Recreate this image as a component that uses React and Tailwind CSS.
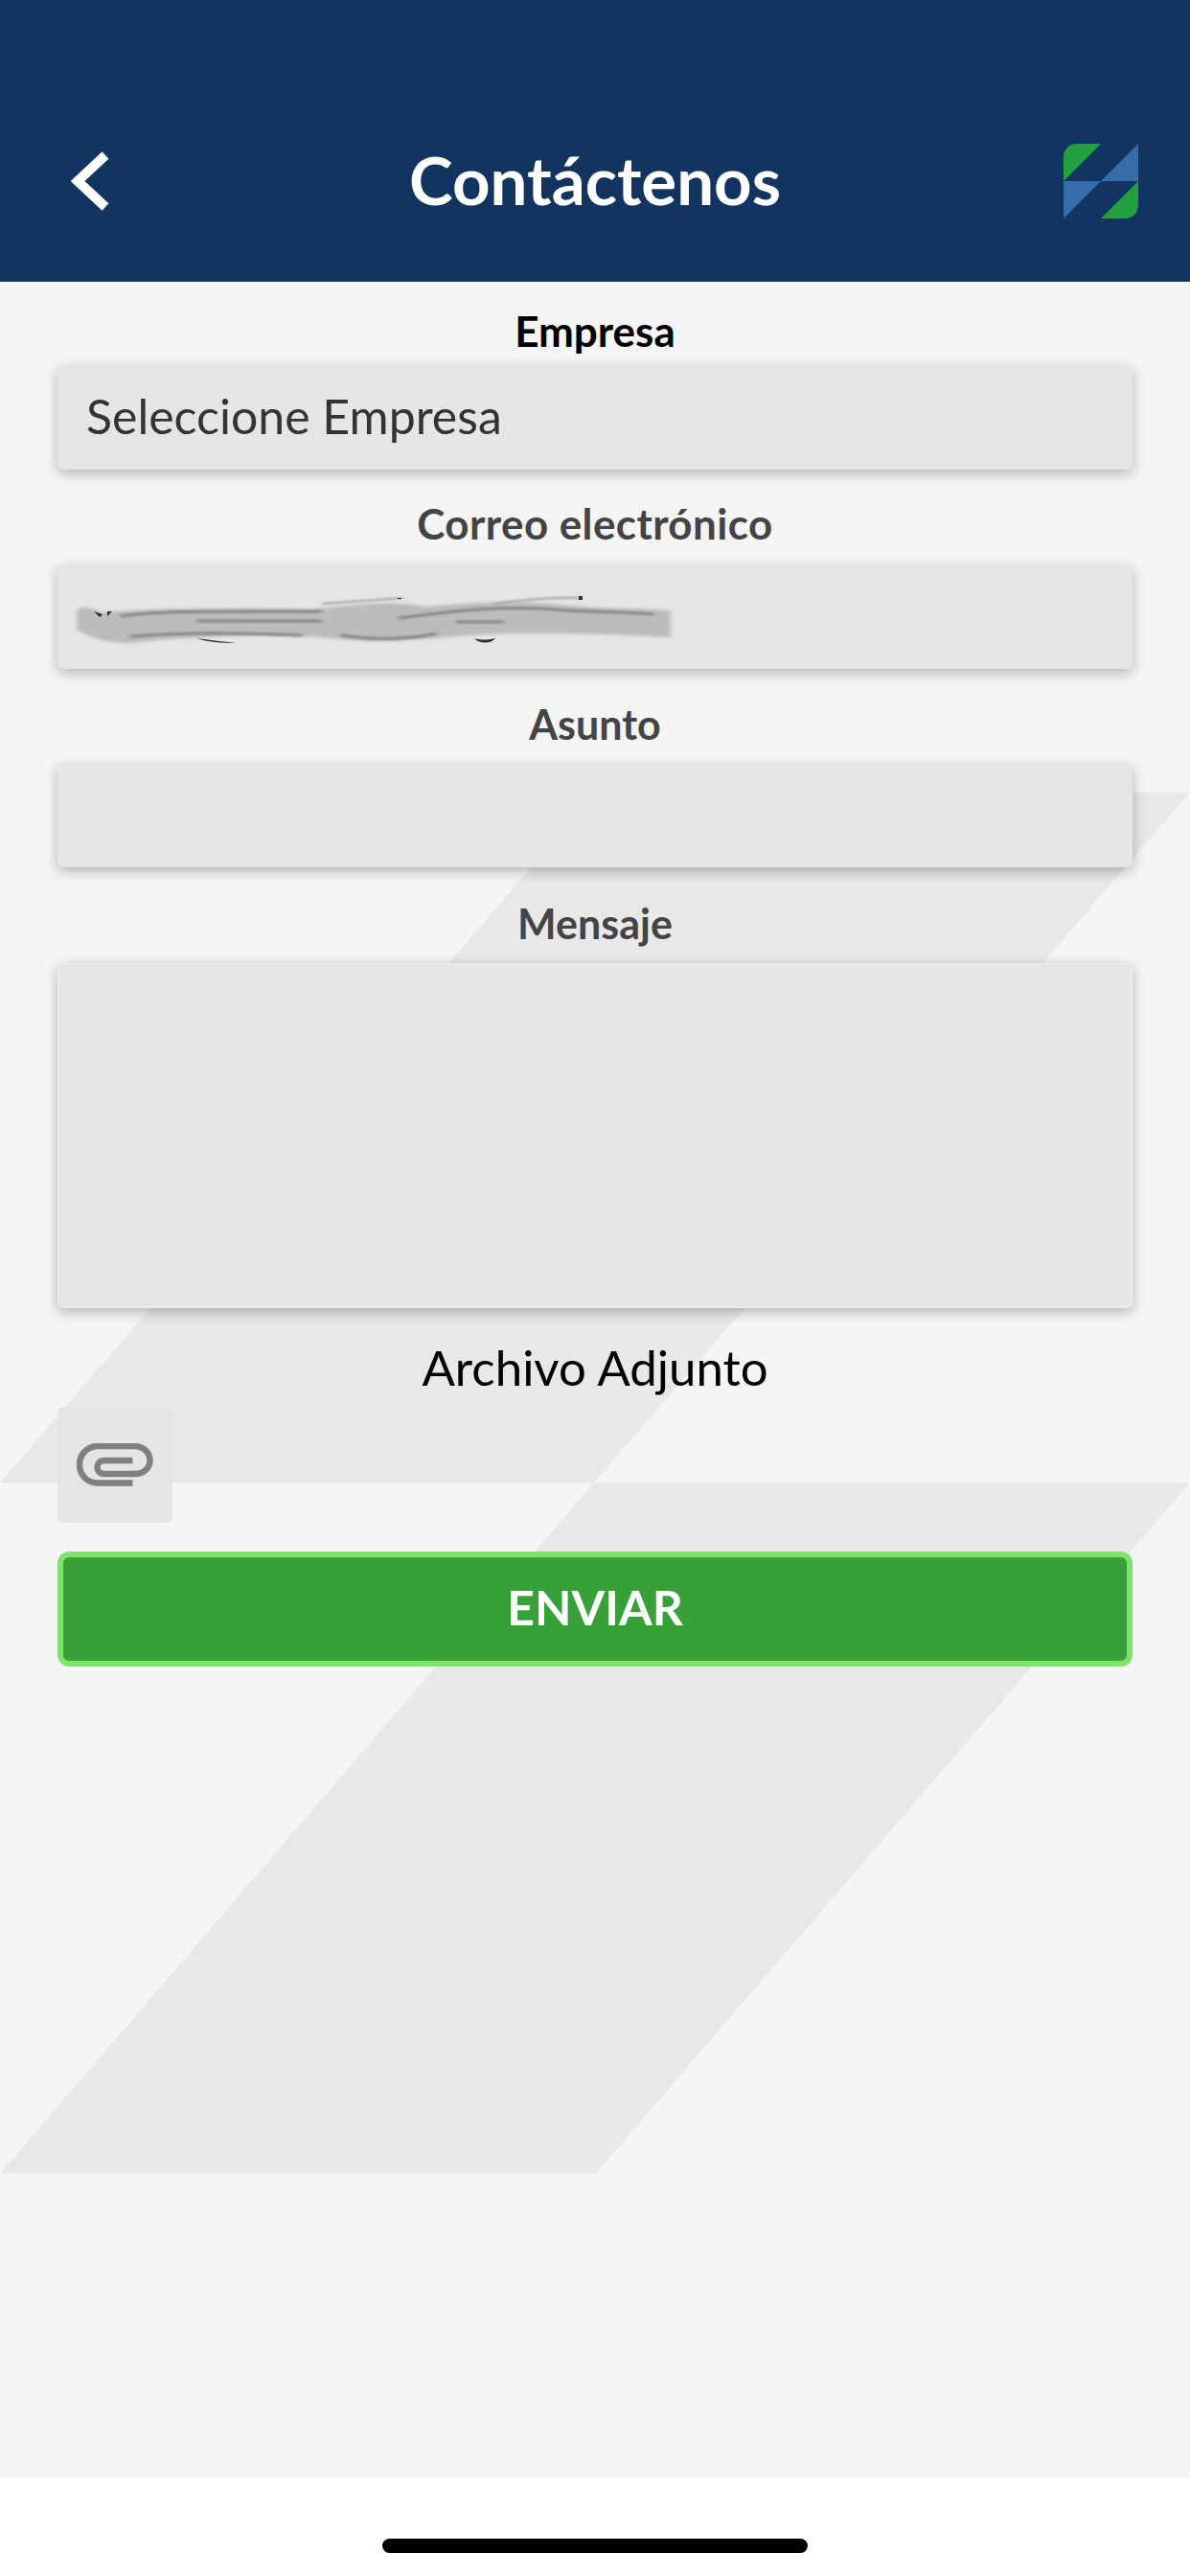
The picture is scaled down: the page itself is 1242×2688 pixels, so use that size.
const fieldClass = "mx-[60px] h-[108px] rounded-[6px] bg-[#e5e5e5] shadow-[0_4px_14px_rgba(0,0,0,0.28)]"
const labelClass = "flex items-center justify-center font-bold text-[43px] leading-none text-[#444444]"

const Logo = () => (
  <svg width="78" height="78" viewBox="0 0 78 78">
    <path d="M0 39V14A14 14 0 0 1 14 0H39Z" fill="#24a03f" />
    <path d="M39 78H64A14 14 0 0 0 78 64V39Z" fill="#24a03f" />
    <path d="M39 39L78 0V39Z" fill="#366cab" />
    <path d="M0 39H39L0 78Z" fill="#366cab" />
  </svg>
)

const Paperclip = () => (
  <svg width="80" height="46" viewBox="0 0 80 46" fill="none" stroke="#808080" strokeWidth="6.5">
    <path d="M58.5 41.5H22.5C11 41.5 3 33 3 22.5C3 11.5 11 3 22.5 3H60C70 3 76.5 10 76.5 18C76.5 26 70 32 60 32H29C24 32 21.5 29 21.5 25C21.5 21.5 24 18 29 18H58.5" />
  </svg>
)

const Scribble = () => (
  <svg width="630" height="70" viewBox="0 0 630 70" fill="none">
    <defs>
      <filter id="smudge" x="-5%" y="-50%" width="110%" height="200%">
        <feGaussianBlur stdDeviation="2.5 1.5" />
      </filter>
      <filter id="streak" x="-5%" y="-50%" width="110%" height="200%">
        <feGaussianBlur stdDeviation="2 1" />
      </filter>
    </defs>
    <path filter="url(#smudge)" d="M4 28C10 22 18 24 30 30C80 26 140 25 250 27C300 20 340 18 370 24C420 18 480 18 520 23C560 26 600 26 624 28V56C590 54 540 52 470 52C420 52 380 58 330 60C300 62 260 54 210 54C160 54 110 56 60 62C30 62 14 54 4 48Z" fill="#bcbcbc" />
    <g filter="url(#streak)" stroke="#858585" strokeWidth="3">
      <path d="M50 34C90 28 140 29 260 29M130 39H260M60 55C120 51 180 51 240 54M280 54C320 60 350 58 380 52M340 36C400 28 440 24 490 26C530 30 570 29 606 32M400 40H450" />
      <path d="M260 21C290 19 320 17 345 15M440 21C470 17 500 14 530 15" stroke="#a0a0a0" strokeWidth="2" />
    </g>
    <path d="M22 29L31 32L28 35ZM36 29L41 29L36 34ZM129 57C145 59 160 61 170 62C155 62 140 61 129 57ZM419 57C426 59 434 59 441 57C437 63 424 63 419 57ZM528 13H532V17H528ZM339 15H343V16H339Z" fill="#2f2f2f" />
  </svg>
)

const App = () => {
  return (
    <div className="flex h-[2688px] w-[1242px] flex-col bg-white font-['Lato',sans-serif]">
      <header className="grid h-[294px] shrink-0 grid-cols-[1fr_auto_1fr] bg-[#123460] px-[54px] pt-[150px]">
        <svg width="42" height="62" viewBox="0 0 42 62" fill="none" stroke="#ffffff" strokeWidth="10" className="ml-[18px] mt-[8px]">
          <path d="M38 4L9 31L38 58" />
        </svg>
        <h1 className="mt-[3px] text-[69px] font-bold leading-none text-white">Contáctenos</h1>
        <div className="justify-self-end">
          <Logo />
        </div>
      </header>

      <main className="relative h-[2292px] shrink-0 bg-[#f5f5f5]">
        <svg className="absolute left-0 top-0" width="1242" height="2292" viewBox="0 0 1242 2292">
          <path d="M622 533H1242L620 1253H0Z" fill="#e8e8e8" />
          <path d="M620 1253H1242L622 1974H0Z" fill="#e8e8e8" />
        </svg>

        <form className="relative flex flex-col">
          <label className={`${labelClass} h-[88px] pt-[14px] text-[44px] text-black`}>Empresa</label>
          <div className={`${fieldClass} flex items-center pb-[3px] pl-[30px] text-[50px] text-[#333333]`}>Seleccione Empresa</div>

          <label className={`${labelClass} h-[100px] pt-[12px] text-[44px] tracking-[0.4px]`}>Correo electrónico</label>
          <div className={`${fieldClass} flex items-center pl-[16px]`}>
            <Scribble />
          </div>

          <label className={`${labelClass} h-[99px] pt-[16px]`}>Asunto</label>
          <div className={fieldClass} />

          <label className={`${labelClass} h-[100px] pt-[16px]`}>Mensaje</label>
          <div className="mx-[60px] h-[360px] rounded-[6px] border-2 border-[#ececec] bg-[#e5e5e5] shadow-[0_4px_14px_rgba(0,0,0,0.28)]" />

          <div className="flex h-[103px] items-center justify-center pt-[20px] text-[51px] leading-none text-black">Archivo Adjunto</div>

          <button type="button" className="ml-[60px] flex h-[121px] w-[120px] items-center justify-center rounded-[6px] bg-[#e5e5e5]">
            <Paperclip />
          </button>

          <button type="button" className="mx-[60px] mt-[30px] h-[120px] rounded-[12px] border-[6px] border-[#7de36a] bg-[#37a039] pb-[4px] text-[50px] font-bold text-white">
            ENVIAR
          </button>
        </form>
      </main>

      <footer className="flex flex-1 justify-center pt-[63px]">
        <div className="h-[15px] w-[444px] rounded-[8px] bg-black" />
      </footer>
    </div>
  )
}

export default App
